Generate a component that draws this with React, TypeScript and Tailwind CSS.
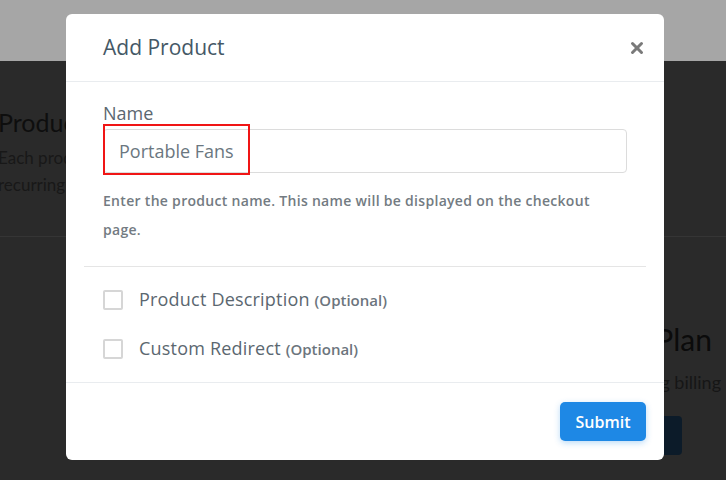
import { X } from 'lucide-react';

const FONT = { fontFamily: '"Open Sans", Lato, "Liberation Sans", sans-serif' };
const LATO = { fontFamily: 'Lato, "Open Sans", "Liberation Sans", sans-serif' };

function Backdrop() {
  return (
    <div className="flex flex-col w-full h-full" style={LATO}>
      <div className="h-[61px] bg-[#a6a6a6]" />
      <div className="flex-1 bg-[#2a2a2a] flex flex-col">
        <div className="h-[176px] border-b border-[#353535] pt-[46px] ml-[-2px]">
          <div className="text-[25px] leading-[30px] text-[#0e0e0e]">Products</div>
          <div className="mt-[7px] text-[17px] leading-[27px] text-[#181818]">
            Each product can be a one-time<br />recurring payment plan
          </div>
        </div>
        <div className="flex flex-col items-end">
          <div className="mt-[85px] mr-[14px] text-[30px] leading-[34px] text-[#0b0b0b]">Subscription Plan</div>
          <div className="mt-[14px] mr-[5px] text-[18px] leading-[24px] text-[#161616]">Set up recurring billing</div>
          <div className="mt-[22px] mr-[44px] w-[120px] h-[39px] rounded-[4px] bg-[#0c1b29]" />
        </div>
      </div>
    </div>
  );
}

function Checkbox({ label }: { label: string }) {
  return (
    <label className="flex items-center h-[49px] cursor-pointer">
      <span className="w-[20px] h-[20px] border-2 border-[#d6d6d6] rounded-[2px] bg-white" />
      <span className="ml-[16px] text-[18px] tracking-[0.2px] text-[#5b6770]">
        {label} <span className="text-[15px] font-semibold tracking-normal text-[#6c757d]">(Optional)</span>
      </span>
    </label>
  );
}

export default function App() {
  return (
    <div className="relative w-[726px] h-[480px] overflow-hidden" style={FONT}>
      <Backdrop />

      {/* modal */}
      <div className="absolute left-[66px] top-[14px] w-[598px] h-[446px] bg-white rounded-[6px] flex flex-col">
        <div className="h-[68px] flex items-center justify-between pl-[37px] pr-[18px] border-b border-[#e9ecef]">
          <h2 className="text-[21px] text-[#455866]">Add Product</h2>
          <X className="w-[18px] h-[18px] text-[#7a7a7a]" strokeWidth={4} />
        </div>

        <div className="h-[300px] flex flex-col">
          <div className="px-[37px] pt-[21px]">
            <div className="text-[18px] leading-[20px] text-[#5b6770]">Name</div>
            <div className="relative mt-[6px]">
              <input
                type="text"
                defaultValue="Portable Fans"
                className="w-full h-[44px] pl-[15px] border border-[#dcdcdc] rounded-[4px] text-[18px] text-[#6b7780] outline-none"
                style={FONT}
              />
              <div className="absolute left-0 top-[-5px] w-[147px] h-[51px] border-2 border-[#f01515] pointer-events-none" />
            </div>
            <p className="mt-[13px] max-w-[500px] text-[14px] leading-[29px] tracking-[0.3px] font-semibold text-[#737b82]">
              Enter the product name. This name will be displayed on the checkout page.
            </p>
          </div>

          <div className="mx-[18px] mt-[22px] border-t border-[#e5e5e5]" />

          <div className="px-[37px] pt-[8px]">
            <Checkbox label="Product Description" />
            <Checkbox label="Custom Redirect" />
          </div>
        </div>

        <div className="flex-1 border-t border-[#e9ecef] flex items-center justify-end pr-[18px]">
          <button className="w-[86px] h-[39px] rounded-[5px] bg-[#1e88e5] text-white text-[16px] font-semibold shadow-[0_2px_6px_rgba(30,136,229,0.3)]">
            Submit
          </button>
        </div>
      </div>
    </div>
  );
}
